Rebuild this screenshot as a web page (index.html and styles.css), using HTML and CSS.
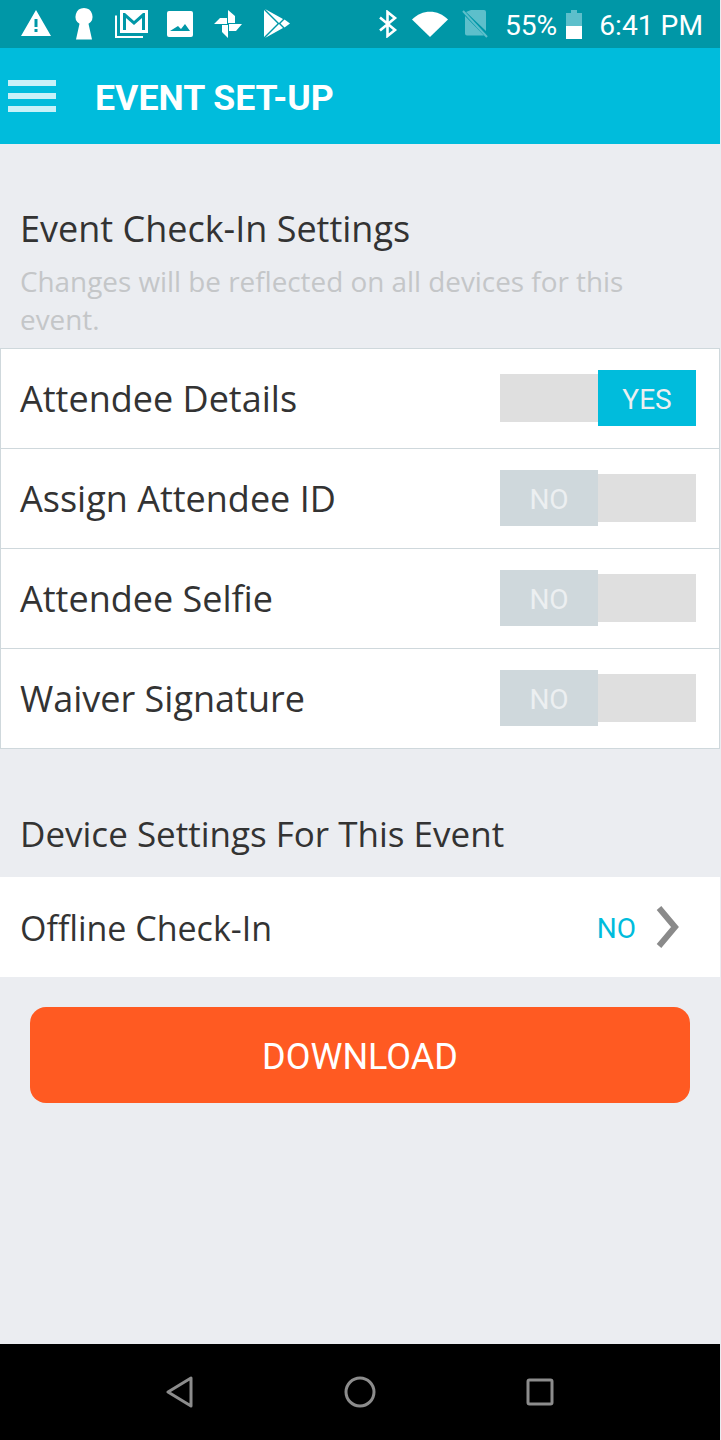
FILE: index.html
```html
<!DOCTYPE html>
<html>
<head>
  <title>Event Set-Up</title>
  <link rel="stylesheet" href="styles.css">
</head>
<body>
  <div class="app">
    <div class="status-bar">
      <div class="status-icons">
        <svg class="ic-alert" width="32" height="30" viewBox="0 0 32 30"><path fill="#fff" fill-rule="evenodd" d="M16 1 31 27H1ZM14.500 10v8h3v-8ZM14.500 20v3h3v-3Z"/></svg>
        <svg class="ic-key" width="20" height="32" viewBox="0 0 20 32"><path fill="#fff" d="M10 0a8.500 8.500 0 0 1 4.500 15.700L18 31.500H2L5.500 15.700A8.500 8.500 0 0 1 10 0Z"/></svg>
        <svg class="ic-mail" width="36" height="30" viewBox="0 0 36 30"><path fill="none" stroke="#fff" stroke-width="2" d="M2 6.500v21.500h27"/><path fill="#fff" fill-rule="evenodd" d="M6 1h28v23H6ZM9 4v17h3V9l8 7 8-7v12h3V4h-2l-9 8-9-8Z"/></svg>
        <svg class="ic-photo" width="26" height="26" viewBox="0 0 26 26"><path fill="#fff" fill-rule="evenodd" d="M2 0h22a2 2 0 0 1 2 2v22a2 2 0 0 1-2 2H2a2 2 0 0 1-2-2V2a2 2 0 0 1 2-2ZM3 20h20l-5-7-4 5-3-3Z"/></svg>
        <svg class="ic-pin" width="30" height="30" viewBox="0 0 30 30"><path fill="#fff" d="M15 14V1l7 6v7ZM16 15h13l-6 7h-7ZM15 16v13l-6-6v-7ZM14 15H1l6-6h7Z"/></svg>
        <svg class="ic-play" width="26" height="30" viewBox="0 0 26 30"><path fill="#fff" d="M1 0 15 14 19 10ZM0 1v27L13.500 14.500ZM1 29 15 15 19 19ZM20.500 10.500 26 14.500 20.500 18.500 16.500 14.500Z"/></svg>
      </div>
      <div class="status-right">
        <svg class="ic-bt" width="20" height="28" viewBox="0 0 20 28"><path fill="none" stroke="#fff" stroke-width="2.600" d="M2 7.500 17 20 9.500 26V2L17 8 2 20.500"/></svg>
        <svg class="ic-wifi" width="36" height="26" viewBox="0 0 36 26"><path fill="#fff" d="M0 8.500C10-2 26-2 36 8.500L18 26Z"/></svg>
        <svg class="ic-sim" width="26" height="30" viewBox="0 0 26 30"><path fill="#5dbfcb" d="M9 1h13a2 2 0 0 1 2 2v19L4 3ZM3 7l19 19.500H5a2 2 0 0 1-2-2Z"/><path stroke="#5dbfcb" stroke-width="2" d="M1 2l24 26"/></svg>
        <span class="status-text">55%</span>
        <svg class="ic-batt" width="16" height="29" viewBox="0 0 16 29"><path fill="#5dbfcb" d="M5 0h6v3h5v13H0V3h5Z"/><path fill="#fff" d="M0 16h16v13H0Z"/></svg>
        <span class="status-text time">6:41 PM</span>
      </div>
    </div>

    <div class="app-header">
      <div class="menu-icon"><span></span><span></span><span></span></div>
      <h1>EVENT SET-UP</h1>
    </div>

    <div class="content">
      <div class="section-intro">
        <h2>Event Check-In Settings</h2>
        <p>Changes will be reflected on all devices for this event.</p>
      </div>

      <div class="settings-list">
        <div class="setting-row">
          <span class="setting-label">Attendee Details</span>
          <div class="toggle">
            <span class="toggle-knob on">YES</span>
          </div>
        </div>
        <div class="setting-row">
          <span class="setting-label">Assign Attendee ID</span>
          <div class="toggle off">
            <span class="toggle-knob">NO</span>
          </div>
        </div>
        <div class="setting-row">
          <span class="setting-label">Attendee Selfie</span>
          <div class="toggle off">
            <span class="toggle-knob">NO</span>
          </div>
        </div>
        <div class="setting-row">
          <span class="setting-label">Waiver Signature</span>
          <div class="toggle off">
            <span class="toggle-knob">NO</span>
          </div>
        </div>
      </div>

      <h3 class="device-title">Device Settings For This Event</h3>
      <div class="offline-row">
        <span class="setting-label">Offline Check-In</span>
        <span class="offline-value">NO</span>
        <svg class="chevron" width="26" height="44" viewBox="0 0 26 44"><path fill="none" stroke="#8a8a8a" stroke-width="6" d="M5 3 21 22 5 41"/></svg>
      </div>

      <button class="download-btn">DOWNLOAD</button>
    </div>

    <div class="nav-bar">
      <svg width="28" height="32" viewBox="0 0 28 32"><path fill="none" stroke="#8c8c8c" stroke-width="3" stroke-linejoin="round" d="M25 2v28L2 16Z"/></svg>
      <svg width="32" height="32" viewBox="0 0 32 32"><circle cx="16" cy="16" r="14" fill="none" stroke="#8c8c8c" stroke-width="3"/></svg>
      <svg width="28" height="28" viewBox="0 0 28 28"><rect x="2" y="2" width="24" height="24" rx="1.500" fill="none" stroke="#8c8c8c" stroke-width="3"/></svg>
    </div>
  </div>
</body>
</html>
```

FILE: styles.css
```css
* {
  box-sizing: border-box;
  margin: 0;
  padding: 0;
}
body {
  width: 721px;
  height: 1440px;
  overflow: hidden;
  background: #ebedf1;
  font-family: 'Open Sans', sans-serif;
}
.app {
  width: 720px;
  height: 1440px;
  display: flex;
  flex-direction: column;
}
.status-bar {
  height: 48px;
  flex-shrink: 0;
  background: #0097a7;
  display: flex;
  align-items: center;
  justify-content: space-between;
  padding: 0 17px 0 20px;
}
.status-icons,
.status-right {
  display: flex;
  align-items: center;
}
.status-icons {
  gap: 20px;
}
.status-right {
  gap: 14px;
}
.ic-key {
  margin-left: 2px;
}
.ic-photo {
  margin-left: -3px;
}
.ic-play {
  margin-left: 1px;
}
.ic-sim {
  margin-right: 3px;
}
.ic-batt {
  margin-left: -5px;
}
.status-text {
  margin-top: 3px;
  font-family: Roboto, sans-serif;
  font-size: 28.2px;
  color: #fff;
}
.time {
  margin-left: 3px;
}
.app-header {
  height: 96px;
  flex-shrink: 0;
  background: #00bcdc;
  display: flex;
  align-items: center;
  padding-left: 8px;
  gap: 39px;
}
.menu-icon {
  width: 48px;
  display: flex;
  flex-direction: column;
  gap: 7px;
}
.menu-icon span {
  height: 6px;
  background: #c8f1f8;
}
.app-header h1 {
  padding-top: 3px;
  font-family: Roboto, sans-serif;
  font-size: 35.7px;
  font-weight: 700;
  color: #fff;
}
.content {
  flex-grow: 1;
  display: flex;
  flex-direction: column;
}
.section-intro {
  padding: 62px 20px 10px;
}
.section-intro h2 {
  font-size: 36px;
  font-weight: 400;
  line-height: 46px;
  color: #333;
}
.section-intro p {
  margin-top: 10px;
  font-size: 27.85px;
  line-height: 38px;
  color: #c4c6c8;
}
.settings-list {
  background: #fff;
  border: 1px solid #cfd8dc;
  border-top: none;
}
.setting-row {
  height: 100px;
  display: flex;
  align-items: center;
  justify-content: space-between;
  padding: 0 23px 0 19px;
  border-top: 1px solid #cfd8dc;
}
.setting-label {
  font-size: 36px;
  color: #333;
}
.toggle {
  width: 196px;
  height: 48px;
  margin-bottom: 2px;
  background: #dfdfdf;
  display: flex;
  align-items: center;
  justify-content: flex-end;
}
.toggle.off {
  justify-content: flex-start;
}
.toggle-knob {
  width: 98px;
  height: 56px;
  padding-top: 3px;
  background: #cfd8dc;
  display: flex;
  align-items: center;
  justify-content: center;
  font-family: Roboto, sans-serif;
  font-size: 28px;
  color: #eceff1;
}
.toggle-knob.on {
  background: #00bcdc;
}
.device-title {
  margin-top: 62px;
  padding-left: 20px;
  font-size: 35px;
  font-weight: 400;
  line-height: 46px;
  color: #333;
}
.offline-row {
  margin-top: 20px;
  height: 100px;
  background: #fff;
  display: flex;
  align-items: center;
  padding: 0 40px 0 20px;
}
.offline-row .setting-label {
  flex-grow: 1;
  margin-top: 2px;
  font-size: 34px;
}
.offline-value {
  margin-top: 2px;
  margin-right: 18px;
  font-family: Roboto, sans-serif;
  font-size: 28px;
  color: #00bcdc;
}
.download-btn {
  display: block;
  margin: 30px 30px 0;
  height: 96px;
  padding-top: 3px;
  border: none;
  border-radius: 16px;
  background: #ff5a22;
  color: #fff;
  font-family: Roboto, sans-serif;
  font-size: 36px;
}
.nav-bar {
  height: 96px;
  flex-shrink: 0;
  background: #000;
  display: flex;
  align-items: center;
  justify-content: center;
  gap: 150px;
}
```
